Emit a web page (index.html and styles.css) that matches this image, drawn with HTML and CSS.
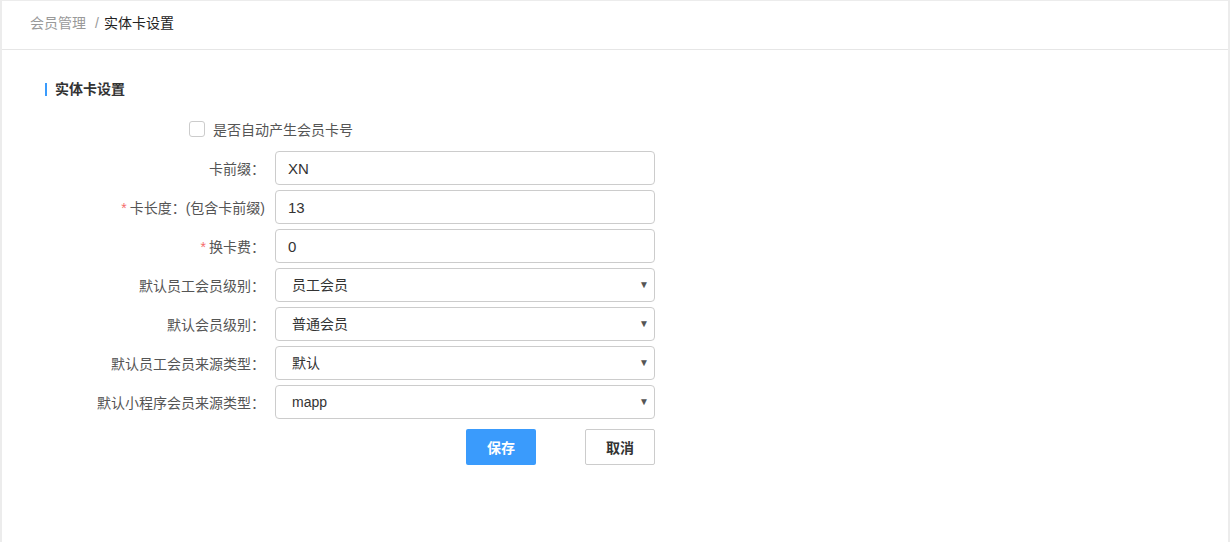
FILE: index.html
```html
<!DOCTYPE html>
<html lang="zh-CN">
<head>
  <meta charset="UTF-8">
  <meta name="viewport" content="width=device-width, initial-scale=1.0">
  <title>实体卡设置</title>
  <link rel="stylesheet" href="styles.css">
</head>
<body>
  <div class="page">
    <!-- 顶部面包屑 -->
    <div class="header">
      <span class="crumb">会员管理</span>
      <span class="sep">/</span>
      <span class="crumb-current">实体卡设置</span>
    </div>

    <div class="content">
      <div class="section-title">实体卡设置</div>

      <label class="check-row">
        <input type="checkbox" class="check">
        <span>是否自动产生会员卡号</span>
      </label>

      <div class="form">
        <div class="form-row">
          <label class="form-label">卡前缀：</label>
          <input class="form-input" type="text" value="XN">
        </div>
        <div class="form-row">
          <label class="form-label"><i class="star">*</i>卡长度：(包含卡前缀)</label>
          <input class="form-input" type="text" value="13">
        </div>
        <div class="form-row">
          <label class="form-label"><i class="star">*</i>换卡费：</label>
          <input class="form-input" type="text" value="0">
        </div>
        <div class="form-row">
          <label class="form-label">默认员工会员级别：</label>
          <div class="select-wrap">
            <select class="form-select"><option>员工会员</option></select>
            <span class="arrow">▼</span>
          </div>
        </div>
        <div class="form-row">
          <label class="form-label">默认会员级别：</label>
          <div class="select-wrap">
            <select class="form-select"><option>普通会员</option></select>
            <span class="arrow">▼</span>
          </div>
        </div>
        <div class="form-row">
          <label class="form-label">默认员工会员来源类型：</label>
          <div class="select-wrap">
            <select class="form-select"><option>默认</option></select>
            <span class="arrow">▼</span>
          </div>
        </div>
        <div class="form-row">
          <label class="form-label">默认小程序会员来源类型：</label>
          <div class="select-wrap">
            <select class="form-select"><option>mapp</option></select>
            <span class="arrow">▼</span>
          </div>
        </div>

        <div class="button-group">
          <button class="btn btn-primary">保存</button>
          <button class="btn btn-default">取消</button>
        </div>
      </div>
    </div>
  </div>
</body>
</html>
```

FILE: styles.css
```css
html, body {
  margin: 0;
  padding: 0;
  height: 100%;
}

body {
  font-family: "Liberation Sans", "Noto Sans CJK SC", sans-serif;
  font-size: 14px;
  color: #333;
  background-color: #ececec;
}

.page {
  min-height: 100%;
  margin: 1px 2px 0 2px;
  background-color: #fff;
}

/* 面包屑 */
.header {
  height: 35px;
  padding: 13px 0 0 28px;
  border-bottom: 1px solid #e6e6e6;
  display: flex;
  align-items: flex-start;
  line-height: 18px;
  font-size: 14px;
}

.crumb {
  color: #999;
}

.sep {
  color: #999;
  margin: 0 5px 0 9px;
}

.crumb-current {
  color: #222;
}

.content {
  padding: 29px 0 40px 43px;
}

.section-title {
  height: 20px;
  line-height: 20px;
  font-size: 14px;
  font-weight: bold;
  color: #333;
  display: flex;
  align-items: center;
}

.section-title::before {
  content: "";
  width: 2px;
  height: 13px;
  background-color: #3a9bfc;
  margin-right: 8px;
}

.check-row {
  display: flex;
  align-items: center;
  height: 20px;
  margin: 20px 0 12px 144px;
  color: #555;
}

.check {
  appearance: none;
  width: 16px;
  height: 16px;
  margin: 0 8px 0 0;
  border: 1px solid #ccc;
  border-radius: 3px;
  background: #fff;
  box-sizing: border-box;
}

.form {
  display: flex;
  flex-direction: column;
  gap: 5px;
  width: 610px;
}

.form-row {
  display: grid;
  grid-template-columns: 220px 380px;
  column-gap: 10px;
  align-items: center;
}

.form-label {
  text-align: right;
  color: #555;
  white-space: nowrap;
}

.star {
  font-style: normal;
  color: #f56c6c;
  margin-right: 3px;
}

.form-input,
.form-select {
  width: 100%;
  height: 34px;
  box-sizing: border-box;
  border: 1px solid #ccc;
  border-radius: 4px;
  background: #fff;
  font-family: inherit;
  color: #333;
  outline: none;
}

.form-input {
  padding: 0 12px;
  font-size: 15px;
}

.select-wrap {
  position: relative;
}

.form-select {
  appearance: none;
  padding: 0 30px 0 16px;
  font-size: 14px;
}

.arrow {
  position: absolute;
  right: 6px;
  top: 11px;
  font-size: 10px;
  color: #555;
  pointer-events: none;
}

.button-group {
  display: flex;
  justify-content: flex-end;
  gap: 49px;
  margin-top: 5px;
}

.btn {
  width: 70px;
  height: 36px;
  border-radius: 2px;
  font-family: inherit;
  font-size: 14px;
  font-weight: bold;
  cursor: pointer;
}

.btn-primary {
  background-color: #3a9bfc;
  border: none;
  color: #fff;
}

.btn-default {
  background-color: #fff;
  border: 1px solid #ccc;
  color: #333;
}
```
